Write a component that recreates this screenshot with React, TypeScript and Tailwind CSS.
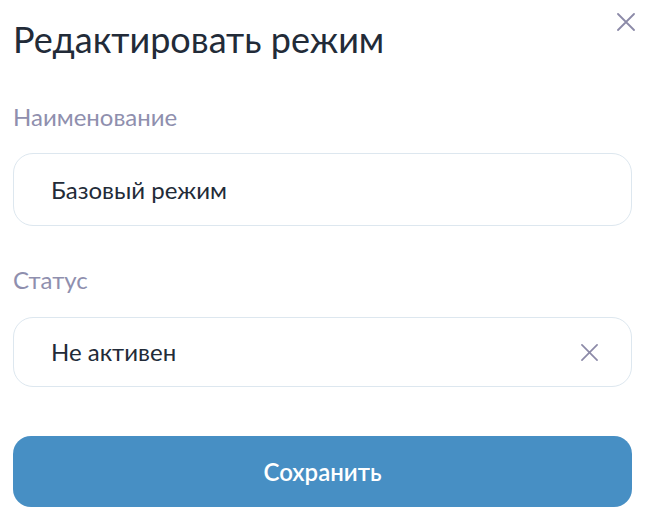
const Cross = ({ className }: { className: string }) => (
  <svg viewBox="0 0 18 18" className={className} fill="none" stroke="currentColor" strokeWidth={1.8} strokeLinecap="round">
    <path d="M1 1L17 17M17 1L1 17" />
  </svg>
);

const Field = ({ value, clearable, height }: { value: string; clearable?: boolean; height: string }) => (
  <div className={`flex items-center justify-between rounded-[20px] border border-[#dde7ef] bg-white pl-[37px] pr-[33px] ${height}`}>
    <span className="text-[24px] leading-[28px] text-[#222b38]">{value}</span>
    {clearable && <Cross className="w-[17px] h-[17px] text-[#8c8aa8]" />}
  </div>
);

const App = () => {
  return (
    <div className="relative w-[648px] h-[524px] bg-white pl-[13px] pr-[16px] pt-[15px] font-['Lato',sans-serif] antialiased">
      <button className="absolute right-[13px] top-[13px] text-[#8c8aa8]">
        <Cross className="w-[18px] h-[18px]" />
      </button>

      <h1 className="text-[36px] leading-[48px] text-[#222b38]">Редактировать режим</h1>

      <p className="mt-[40px] mb-[22px] text-[24px] leading-[28px] text-[#8f8fae]">Наименование</p>
      <Field value="Базовый режим" height="h-[73px]" />

      <p className="mt-[40px] mb-[23px] text-[24px] leading-[28px] text-[#8f8fae]">Статус</p>
      <Field value="Не активен" clearable height="h-[70px]" />

      <button className="mt-[49px] w-full h-[71px] rounded-[18px] bg-[#478fc4] text-white text-[24px] font-semibold">
        Сохранить
      </button>
    </div>
  );
};

export default App;
